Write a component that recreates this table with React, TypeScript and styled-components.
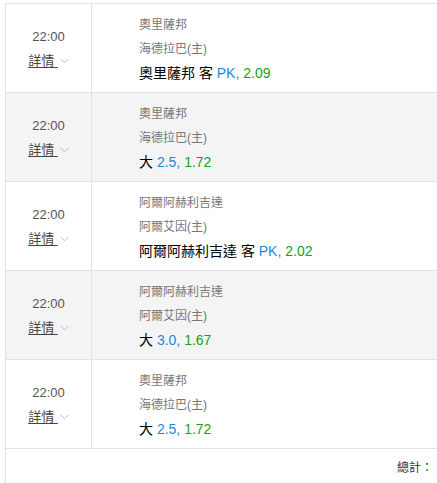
import styled, { createGlobalStyle } from "styled-components";

const GlobalStyle = createGlobalStyle`
  body {
    margin: 0;
    background: #fff;
    font-family: "Liberation Sans", "Noto Sans CJK TC", sans-serif;
  }
`;

const Page = styled.div`
  padding-top: 3px;
  padding-left: 5px;
  overflow: hidden;
`;

const Table = styled.div`
  border-top: 1px solid #e2e2e2;
  border-left: 1px solid #e2e2e2;
  width: 440px;
`;

const Row = styled.div<{ $shaded?: boolean }>`
  display: grid;
  grid-template-columns: 86px 1fr;
  height: 88px;
  border-bottom: 1px solid #e2e2e2;
  background: ${({ $shaded }) => ($shaded ? "#f4f4f4" : "#fff")};
`;

const TimeCell = styled.div`
  border-right: 1px solid #e2e2e2;
  display: flex;
  flex-direction: column;
  align-items: center;
  justify-content: center;
  padding-top: 1px;
`;

const Time = styled.span`
  font-size: 13px;
  line-height: 24px;
  color: #555;
`;

const DetailLink = styled.span`
  display: flex;
  align-items: center;
  gap: 2px;
  line-height: 24px;
  cursor: pointer;
`;

const DetailText = styled.span`
  font-size: 13px;
  color: #444;
  text-decoration: underline;
  text-underline-offset: 2px;
  white-space: pre;
`;

const InfoCell = styled.div`
  display: flex;
  flex-direction: column;
  padding: 9px 0 0 47px;
`;

const TeamName = styled.span`
  font-size: 12px;
  line-height: 24px;
  color: #777;
`;

const Pick = styled.span`
  font-size: 14px;
  line-height: 24px;
  color: #000;
`;

const Line = styled.span`
  color: #1a8ad6;
`;

const Odds = styled.span`
  color: #16a016;
`;

const Footer = styled.div`
  height: 34px;
  display: flex;
  align-items: center;
  justify-content: flex-end;
  padding-right: 13px;
  font-size: 12px;
  color: #333;
`;

const Chevron = () => (
  <svg width="9" height="6" viewBox="0 0 9 6">
    <polyline points="0.5,0.8 4.5,4.8 8.5,0.8" fill="none" stroke="#bbb" strokeWidth="1" />
  </svg>
);

type Bet = {
  time: string;
  away: string;
  home: string;
  pick: string;
  line: string;
  odds: string;
};

const bets: Bet[] = [
  { time: "22:00", away: "奧里薩邦", home: "海德拉巴(主)", pick: "奧里薩邦 客", line: "PK,", odds: "2.09" },
  { time: "22:00", away: "奧里薩邦", home: "海德拉巴(主)", pick: "大", line: "2.5,", odds: "1.72" },
  { time: "22:00", away: "阿爾阿赫利吉達", home: "阿爾艾因(主)", pick: "阿爾阿赫利吉達 客", line: "PK,", odds: "2.02" },
  { time: "22:00", away: "阿爾阿赫利吉達", home: "阿爾艾因(主)", pick: "大", line: "3.0,", odds: "1.67" },
  { time: "22:00", away: "奧里薩邦", home: "海德拉巴(主)", pick: "大", line: "2.5,", odds: "1.72" },
];

export default function App() {
  return (
    <>
      <GlobalStyle />
      <Page>
        <Table>
          {bets.map((b, i) => (
            <Row key={i} $shaded={i % 2 === 1}>
              <TimeCell>
                <Time>{b.time}</Time>
                <DetailLink>
                  <DetailText>{"詳情 "}</DetailText>
                  <Chevron />
                </DetailLink>
              </TimeCell>
              <InfoCell>
                <TeamName>{b.away}</TeamName>
                <TeamName>{b.home}</TeamName>
                <Pick>
                  {b.pick} <Line>{b.line}</Line> <Odds>{b.odds}</Odds>
                </Pick>
              </InfoCell>
            </Row>
          ))}
          <Footer>總計：</Footer>
        </Table>
      </Page>
    </>
  );
}
